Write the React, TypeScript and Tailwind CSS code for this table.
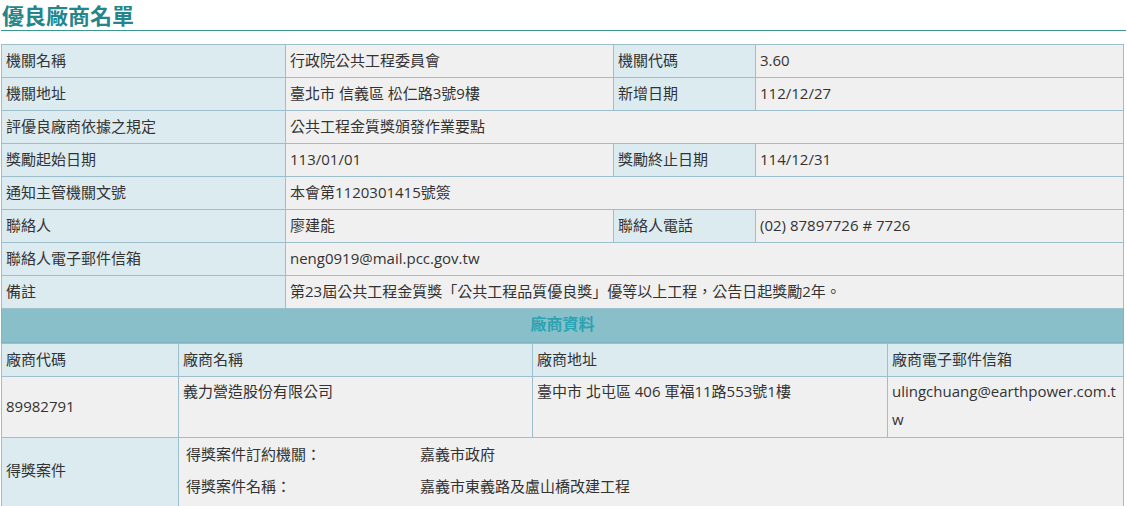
import React from 'react';

const font = { fontFamily: '"Open Sans", "Microsoft JhengHei", "Noto Sans CJK TC", sans-serif' };

const th = 'border border-[#9dbfcc] bg-[#dcebf0] px-1 pt-0 pb-[3px] h-[33px] text-left font-normal align-middle';
const td = 'border border-[#9dbfcc] bg-[#f0f0f0] px-1 pt-0 pb-[3px] h-[33px] align-middle';

const info: [string, string, string?, string?][] = [
  ['機關名稱', '行政院公共工程委員會', '機關代碼', '3.60'],
  ['機關地址', '臺北市 信義區 松仁路3號9樓', '新增日期', '112/12/27'],
  ['評優良廠商依據之規定', '公共工程金質獎頒發作業要點'],
  ['獎勵起始日期', '113/01/01', '獎勵終止日期', '114/12/31'],
  ['通知主管機關文號', '本會第1120301415號簽'],
  ['聯絡人', '廖建能', '聯絡人電話', '(02) 87897726 # 7726'],
  ['聯絡人電子郵件信箱', 'neng0919@mail.pcc.gov.tw'],
  ['備註', '第23屆公共工程金質獎「公共工程品質優良獎」優等以上工程，公告日起獎勵2年。'],
];

const App: React.FC = () => {
  return (
    <div className="w-[1127px] bg-white text-[15px] leading-[20px] text-[#333]" style={font}>
      <h1 className="mx-[1px] mt-[1px] border-b border-[#3d9696] pb-[1px] pl-[1px] text-[22px] font-bold leading-[28px] text-[#24868a]">
        優良廠商名單
      </h1>
      <div className="pl-[1px] pr-[2px] pt-[13px]">
        <table className="w-[1123px] table-fixed border-collapse">
          <colgroup>
            <col className="w-[284px]" />
            <col className="w-[328px]" />
            <col className="w-[142px]" />
            <col />
          </colgroup>
          <tbody>
            {info.map(([a, b, c, d]) => (
              <tr key={a}>
                <th className={th}>{a}</th>
                {c ? (
                  <>
                    <td className={td}>{b}</td>
                    <th className={th}>{c}</th>
                    <td className={td}>{d}</td>
                  </>
                ) : (
                  <td className={td} colSpan={3}>{b}</td>
                )}
              </tr>
            ))}
            <tr>
              <td colSpan={4} className="h-[34px] border border-[#7fb2c0] bg-[#88bfc8] pb-[3px] text-center text-[16px] font-bold text-[#2ba3b3]">
                廠商資料
              </td>
            </tr>
          </tbody>
        </table>
        <table className="w-[1123px] table-fixed border-collapse">
          <colgroup>
            <col className="w-[177px]" />
            <col className="w-[354px]" />
            <col className="w-[355px]" />
            <col />
          </colgroup>
          <tbody>
            <tr>
              <th className={th}>廠商代碼</th>
              <th className={th}>廠商名稱</th>
              <th className={th}>廠商地址</th>
              <th className={th}>廠商電子郵件信箱</th>
            </tr>
            <tr>
              <td className="h-[61px] border border-[#9dbfcc] bg-[#f0f0f0] px-1 pb-[2px] align-middle">89982791</td>
              <td className="border border-[#9dbfcc] bg-[#f0f0f0] px-1 pb-[2px] align-top leading-[28px]">義力營造股份有限公司</td>
              <td className="border border-[#9dbfcc] bg-[#f0f0f0] px-1 pb-[2px] align-top leading-[28px]">臺中市 北屯區 406 軍福11路553號1樓</td>
              <td className="border border-[#9dbfcc] bg-[#f0f0f0] px-1 pb-[2px] align-top leading-[28px] break-all">ulingchuang@earthpower.com.tw</td>
            </tr>
            <tr>
              <th className="h-[70px] border border-[#9dbfcc] bg-[#dcebf0] px-1 pb-[6px] text-left font-normal align-middle">得獎案件</th>
              <td colSpan={3} className="border border-[#9dbfcc] bg-[#f0f0f0] px-[7px] pt-0 pb-[6px] align-middle">
                <div className="grid grid-cols-[234px_1fr] leading-[32px]">
                  <span>得獎案件訂約機關：</span>
                  <span>嘉義市政府</span>
                  <span>得獎案件名稱：</span>
                  <span>嘉義市東義路及盧山橋改建工程</span>
                </div>
              </td>
            </tr>
          </tbody>
        </table>
      </div>
    </div>
  );
};

export default App;
